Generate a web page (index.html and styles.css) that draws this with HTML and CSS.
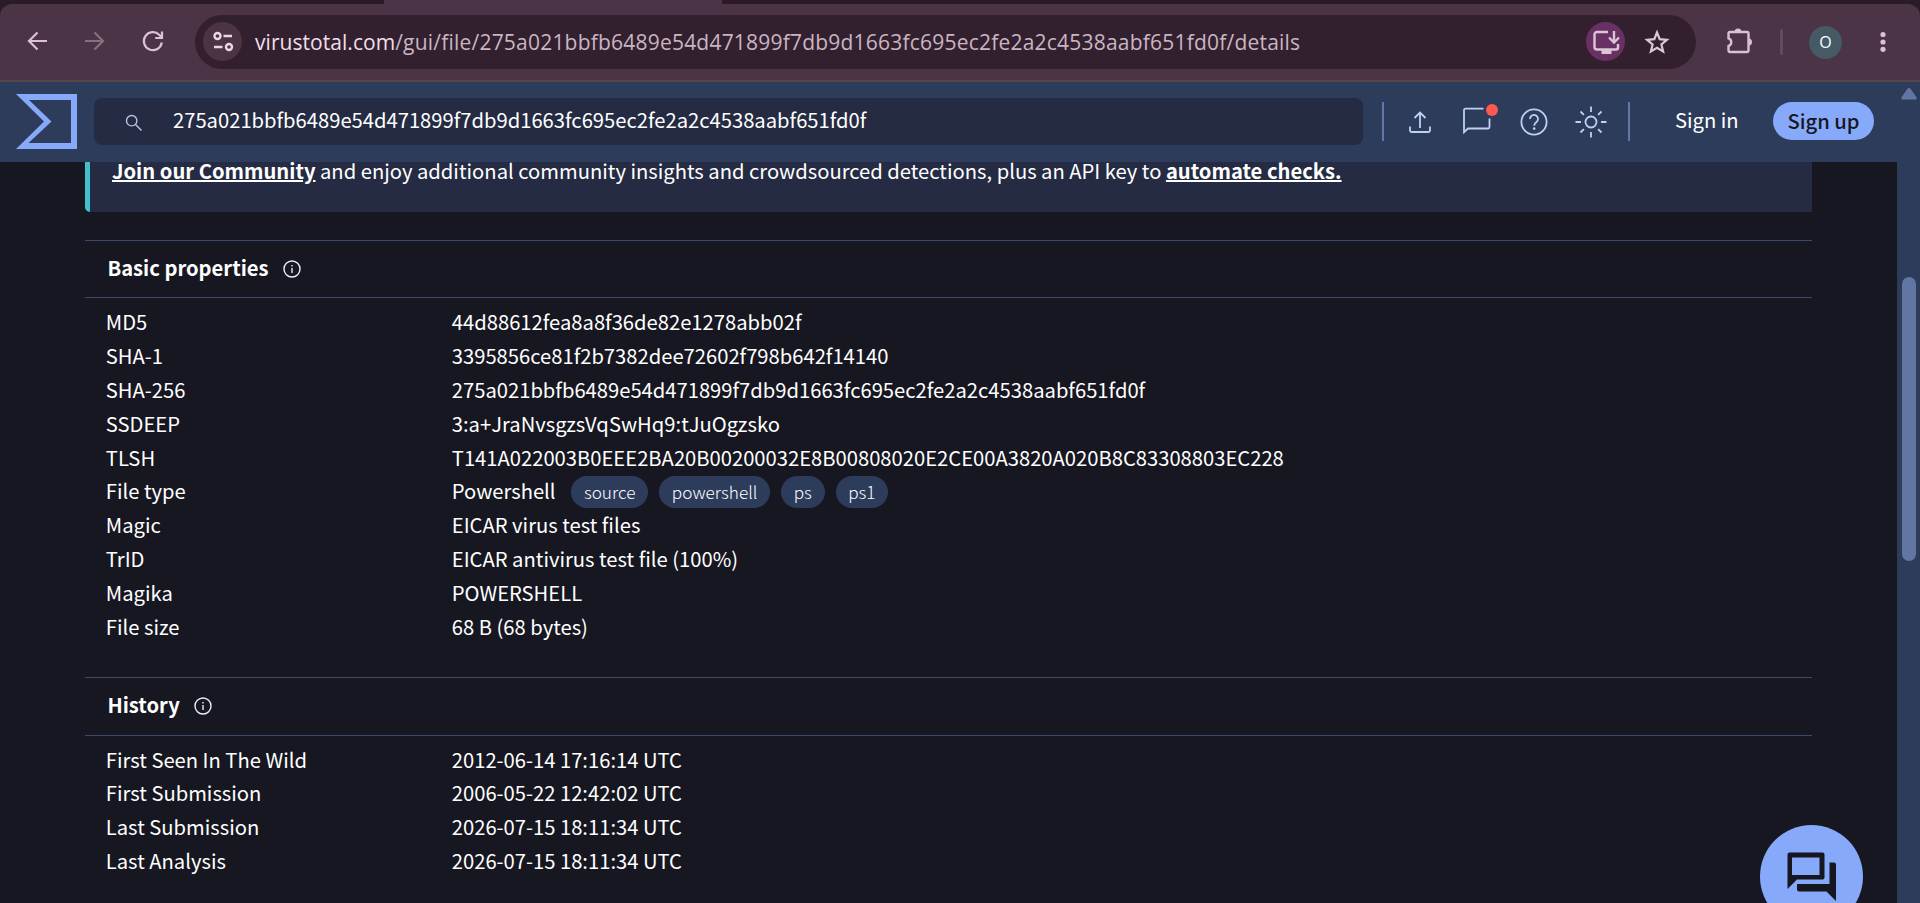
FILE: index.html
```html
<!DOCTYPE html>
<html lang="en">
<head>
  <meta charset="UTF-8" />
  <meta name="viewport" content="width=device-width, initial-scale=1.0"/>
  <title>VirusTotal - File - 275a021bbfb6489e54d471899f7db9d1663fc695ec2fe2a2c4538aabf651fd0f</title>
  <link rel="stylesheet" href="styles.css">
</head>
<body>
  <!-- browser chrome -->
  <div class="tabstrip"><div class="active-tab"></div></div>
  <div class="toolbar">
    <svg class="nav-icon" width="24" height="24" viewBox="0 0 24 24"><path d="M22 12H4M12.500 3.500L4 12l8.500 8.500"/></svg>
    <svg class="nav-icon disabled" width="24" height="24" viewBox="0 0 24 24"><path d="M2 12h18M11.500 3.500L20 12l-8.500 8.500"/></svg>
    <svg class="nav-icon" width="24" height="24" viewBox="0 0 24 24"><path d="M20.800 13.500a9 9 0 1 1-2.400-7.600l2.500 2.600M21 2.500V9h-6.800"/></svg>
    <div class="urlbar">
      <div class="site-info">
        <svg width="22" height="22" viewBox="0 0 22 22"><circle cx="5.500" cy="5" r="3"/><path d="M11.500 5H20M2 16h8.500"/><circle cx="17" cy="16" r="3"/></svg>
      </div>
      <div class="url"><span class="domain">virustotal.com</span>/gui/file/275a021bbfb6489e54d471899f7db9d1663fc695ec2fe2a2c4538aabf651fd0f/details</div>
      <div class="install">
        <svg width="28" height="26" viewBox="0 0 28 26"><path d="M16 3H5a2.500 2.500 0 0 0-2.500 2.500V18A2.500 2.500 0 0 0 5 20.500h19a2 2 0 0 0 2-2V15M22 2v11M17 8.500l5 5 5-5"/><path class="solid" d="M9.500 20h10v5h-10z"/></svg>
      </div>
      <svg class="star" width="26" height="26" viewBox="0 0 26 26"><path d="M13 3.500l2.700 6.700 7.200.6-5.500 4.700 1.700 7-6.100-3.800-6.100 3.800 1.700-7-5.500-4.700 7.200-.6z"/></svg>
    </div>
    <svg class="puzzle" width="28" height="28" viewBox="0 0 28 28"><path d="M5 5h17a1.500 1.500 0 0 1 1.500 1.500v17A1.500 1.500 0 0 1 22 25H5a1.500 1.500 0 0 1-1.500-1.500V19a4 4 0 0 0 0-7.600V6.500A1.500 1.500 0 0 1 5 5z"/><path class="solid" d="M9.500 5a3.500 3.500 0 0 1 7 0zM23.500 11.500a3.500 3.500 0 0 1 0 7z"/></svg>
    <div class="toolbar-sep"></div>
    <div class="avatar">O</div>
    <svg class="dots" width="6" height="22" viewBox="0 0 6 22"><circle cx="3" cy="3.500" r="2.600"/><circle cx="3" cy="11" r="2.600"/><circle cx="3" cy="18.300" r="2.600"/></svg>
  </div>

  <!-- site header -->
  <header class="header">
    <svg class="logo" width="61" height="55" viewBox="0 0 61 55"><path fill-rule="evenodd" d="M0 0h61v55H0l28-27.500zM13 6l22.500 21.500L12.500 49H55V6z"/></svg>
    <div class="search">
      <svg width="18" height="18" viewBox="0 0 18 18"><circle cx="6.700" cy="6.700" r="5.200"/><path d="M10.500 10.500l6 6"/></svg>
      <span>275a021bbfb6489e54d471899f7db9d1663fc695ec2fe2a2c4538aabf651fd0f</span>
    </div>
    <div class="header-sep"></div>
    <div class="header-icons">
      <svg width="24" height="24" viewBox="0 0 24 24"><path d="M12 18V3M6.500 8L12 2.500 17.500 8M2 16.500v4A1.500 1.500 0 0 0 3.500 22h17a1.500 1.500 0 0 0 1.500-1.500v-4"/></svg>
      <div class="comments">
        <svg width="30" height="30" viewBox="0 0 30 30"><path d="M22.500 2.700H4.500A1.500 1.500 0 0 0 3 4.200v22l4-3.700h20a1.500 1.500 0 0 0 1.500-1.500v-8.500"/></svg>
        <span class="badge"></span>
      </div>
      <svg width="28" height="28" viewBox="0 0 28 28"><circle cx="14" cy="14" r="12.600"/><path d="M10 11a4 4 0 1 1 6.300 3.200c-1.400 1-2.100 1.700-2.100 3.500"/><circle class="solid" cx="14.200" cy="20.600" r="1.300"/></svg>
      <svg width="32" height="32" viewBox="0 0 32 32"><circle cx="16" cy="16" r="5.500"/><path d="M16 .5V6M16 26v5.500M.5 16H6M26 16h5.500M5.500 5.500l3.400 3.400M23.100 23.100l3.400 3.400M5.500 26.500l3.400-3.400M23.100 8.900l3.400-3.400"/></svg>
    </div>
    <div class="header-sep"></div>
    <a class="signin">Sign in</a>
    <a class="signup">Sign up</a>
  </header>

  <main class="content">
    <div class="banner">
      <p><a>Join our Community</a> and enjoy additional community insights and crowdsourced detections, plus an API key to <a>automate checks.</a></p>
    </div>

    <section class="card">
      <h2>Basic properties
        <svg width="18" height="18" viewBox="0 0 18 18"><circle cx="9" cy="9" r="8"/><path d="M9 8v5M9 5v1.500"/></svg>
      </h2>
      <dl>
        <dt>MD5</dt><dd>44d88612fea8a8f36de82e1278abb02f</dd>
        <dt>SHA-1</dt><dd>3395856ce81f2b7382dee72602f798b642f14140</dd>
        <dt>SHA-256</dt><dd>275a021bbfb6489e54d471899f7db9d1663fc695ec2fe2a2c4538aabf651fd0f</dd>
        <dt>SSDEEP</dt><dd>3:a+JraNvsgzsVqSwHq9:tJuOgzsko</dd>
        <dt>TLSH</dt><dd>T141A022003B0EEE2BA20B00200032E8B00808020E2CE00A3820A020B8C83308803EC228</dd>
        <dt>File type</dt>
        <dd class="tags">Powershell
          <span class="tag">source</span>
          <span class="tag">powershell</span>
          <span class="tag">ps</span>
          <span class="tag">ps1</span>
        </dd>
        <dt>Magic</dt><dd>EICAR virus test files</dd>
        <dt>TrID</dt><dd>EICAR antivirus test file (100%)</dd>
        <dt>Magika</dt><dd>POWERSHELL</dd>
        <dt>File size</dt><dd>68 B (68 bytes)</dd>
      </dl>
    </section>

    <section class="card">
      <h2>History
        <svg width="18" height="18" viewBox="0 0 18 18"><circle cx="9" cy="9" r="8"/><path d="M9 8v5M9 5v1.500"/></svg>
      </h2>
      <dl>
        <dt>First Seen In The Wild</dt><dd>2012-06-14 17:16:14 UTC</dd>
        <dt>First Submission</dt><dd>2006-05-22 12:42:02 UTC</dd>
        <dt>Last Submission</dt><dd>2026-07-15 18:11:34 UTC</dd>
        <dt>Last Analysis</dt><dd>2026-07-15 18:11:34 UTC</dd>
      </dl>
    </section>
  </main>

  <div class="scrollbar">
    <svg width="16" height="12" viewBox="0 0 16 12"><path d="M6.300 1a2 2 0 0 1 3.400 0l5.600 8a1.600 1.600 0 0 1-1.400 2.600H2.100A1.600 1.600 0 0 1 .7 9z"/></svg>
    <div class="thumb"></div>
  </div>

  <div class="chat">
    <svg width="50" height="50" viewBox="0 0 50 50"><path fill-rule="evenodd" d="M2.500.5h33a2 2 0 0 1 2 2v23a2 2 0 0 1-2 2H10L.5 37V2.500a2 2 0 0 1 2-2zM5 5.500V23h27.500V5.500z"/><path d="M42.500 10.500H47a2 2 0 0 1 2 2V49l-9.500-9.500H12a2 2 0 0 1-2-2V32h32.500z"/></svg>
  </div>
</body>
</html>
```
FILE: styles.css
```css
* {
  box-sizing: border-box;
}

body {
  margin: 0;
  height: 903px;
  overflow: hidden;
  background: #171722;
  color: #fff;
  font-family: "Noto Sans CJK SC", "Noto Sans", sans-serif;
  font-size: 20.21px;
}

svg {
  display: block;
  flex: none;
  fill: none;
}

/* browser */
.tabstrip {
  height: 4px;
  background: #2b1a28;
}

.active-tab {
  width: 338px;
  height: 4px;
  margin-left: 384px;
  background: #4a3445;
}

.toolbar {
  display: flex;
  align-items: center;
  height: 78px;
  padding: 0 0 2px 25px;
  background: #4a3445;
  border-bottom: 2px solid #564649;
  border-radius: 12px 12px 0 0;
  box-shadow: 0 -12px 0 12px #2b1a28;
  clip-path: inset(0);
}

.nav-icon {
  margin-right: 34px;
  stroke: #dcc0d6;
  stroke-width: 2.2;
}

.nav-icon.disabled {
  stroke: #87707f;
}

.urlbar {
  display: flex;
  align-items: center;
  width: 1501px;
  height: 54px;
  margin-top: 1px;
  margin-left: -4px;
  padding-left: 8px;
  border-radius: 27px;
  background: #33202e;
}

.site-info,
.install {
  display: flex;
  align-items: center;
  justify-content: center;
  width: 39px;
  height: 39px;
  border-radius: 50%;
  background: #4a3445;
}

.site-info svg {
  stroke: #ead9e5;
  stroke-width: 2.4;
}

.url {
  width: 1331px;
  margin-left: 13px;
  font-family: "Open Sans", sans-serif;
  font-size: 21px;
  letter-spacing: 0.21px;
  line-height: 54px;
  white-space: nowrap;
  color: #c9b5c3;
}

.domain {
  letter-spacing: 0.05px;
  color: #f0dfeb;
}

.install {
  background: #693163;
}

.install svg {
  stroke: #dcc5d5;
  stroke-width: 2.4;
}

.install .solid {
  fill: #dcc5d5;
  stroke: none;
}

.star {
  margin-left: 19px;
  stroke: #dcc5d5;
  stroke-width: 2.2;
}

.puzzle {
  margin-left: 29px;
  stroke: #dcc0d6;
  stroke-width: 2.4;
}

.puzzle .solid {
  fill: #dcc0d6;
  stroke: none;
}

.toolbar-sep {
  width: 3px;
  height: 26px;
  margin-top: 2px;
  margin-left: 27px;
  border-radius: 2px;
  background: #634b5f;
}

.avatar {
  width: 33px;
  height: 33px;
  margin-left: 26px;
  margin-top: 2px;
  border-radius: 50%;
  background: #455a64;
  font-family: "Open Sans", sans-serif;
  font-size: 16px;
  line-height: 33px;
  text-align: center;
}

.dots {
  margin-left: 38px;
  margin-top: 2px;
  fill: #dcc0d6;
}

/* header */
.header {
  display: flex;
  align-items: center;
  height: 80px;
  padding: 0 0 1px 16px;
  background: #2e3c5b;
}

.logo {
  fill: #87a9fa;
}

.search {
  display: flex;
  align-items: center;
  gap: 30px;
  width: 1269px;
  height: 47px;
  margin-left: 17px;
  padding-left: 31px;
  border-radius: 8px;
  background: #242b42;
}

.search svg {
  margin-top: 3px;
  stroke: #b4c5e8;
  stroke-width: 1.4;
}

.search span {
  margin-top: -4px;
}

.header-sep {
  width: 2px;
  height: 39px;
  margin-left: 19px;
  background: #6276ab;
}

.header-icons {
  display: flex;
  align-items: center;
  margin-left: 24px;
  margin-right: 2px;
}

.header-icons svg {
  stroke: #bdd0f5;
  stroke-width: 1.8;
}

.header-icons .solid {
  fill: #bdd0f5;
  stroke: none;
}

.comments {
  position: relative;
  margin: -2px 29px 0 29px;
}

.header-icons > svg:last-child {
  margin-left: 27px;
}

.badge {
  position: absolute;
  top: -2px;
  right: -7px;
  width: 12px;
  height: 12px;
  border-radius: 50%;
  background: #ff5a50;
}

.signin {
  width: 64px;
  margin-left: 45px;
  margin-top: -4px;
  white-space: nowrap;
}

.signup {
  width: 101px;
  height: 38px;
  margin-top: -1px;
  margin-left: 34px;
  border-radius: 19px;
  background: #87a9fa;
  color: #171722;
  font-weight: 500;
  line-height: 37px;
  text-align: center;
}

/* details */
.content {
  width: 1727px;
  margin-left: 85px;
}

.banner {
  height: 50px;
  padding-left: 22px;
  border-left: 5px solid #41bfca;
  border-radius: 0 0 0 5px;
  background: #242b42;
}

.banner p {
  margin: 0;
  line-height: 18px;
  white-space: nowrap;
}

.banner a {
  font-weight: 700;
  text-decoration: underline;
  text-decoration-thickness: 2px;
}

.card {
  margin-top: 28px;
  border-top: 1px solid #3d4968;
}

.card h2 {
  display: flex;
  align-items: center;
  gap: 14px;
  height: 57.4px;
  margin: 0;
  padding: 0 0 3px 22.4px;
  border-bottom: 1px solid #3d4968;
  font-size: 20.21px;
}

.card h2 svg {
  margin-top: 3px;
  stroke: #e8ecf6;
  stroke-width: 1.4;
}

.card dl {
  display: grid;
  grid-template-columns: 346px 1fr;
  grid-auto-rows: 33.8px;
  margin: 0;
  padding: 7px 0 5.9px 20.8px;
  line-height: 33.8px;
  white-space: nowrap;
}

.card dd {
  margin: 0;
}

.tags {
  display: flex;
  align-items: center;
}

.tag {
  height: 32px;
  margin: 2px 11px 0 0;
  padding: 0 12.7px;
  border-radius: 16px;
  background: #2e3c5b;
  font-size: 17.2px;
  font-weight: 300;
  line-height: 32px;
}

.tag:first-child {
  margin-left: 15.6px;
}

/* overlays */
.scrollbar {
  position: fixed;
  top: 82px;
  right: 0;
  width: 23px;
  height: 821px;
  background: #2e3c5b;
}

.scrollbar svg {
  margin: 6px 0 0 4px;
  fill: #6276a3;
}

.thumb {
  width: 14px;
  height: 284px;
  margin: 177px 0 0 5px;
  border-radius: 7px;
  background: #6276a3;
}

.chat {
  position: fixed;
  top: 825px;
  right: 57px;
  width: 103px;
  height: 103px;
  padding: 27px 0 0 27px;
  border-radius: 50%;
  background: #87a9fa;
}

.chat svg {
  fill: #171722;
}
```
